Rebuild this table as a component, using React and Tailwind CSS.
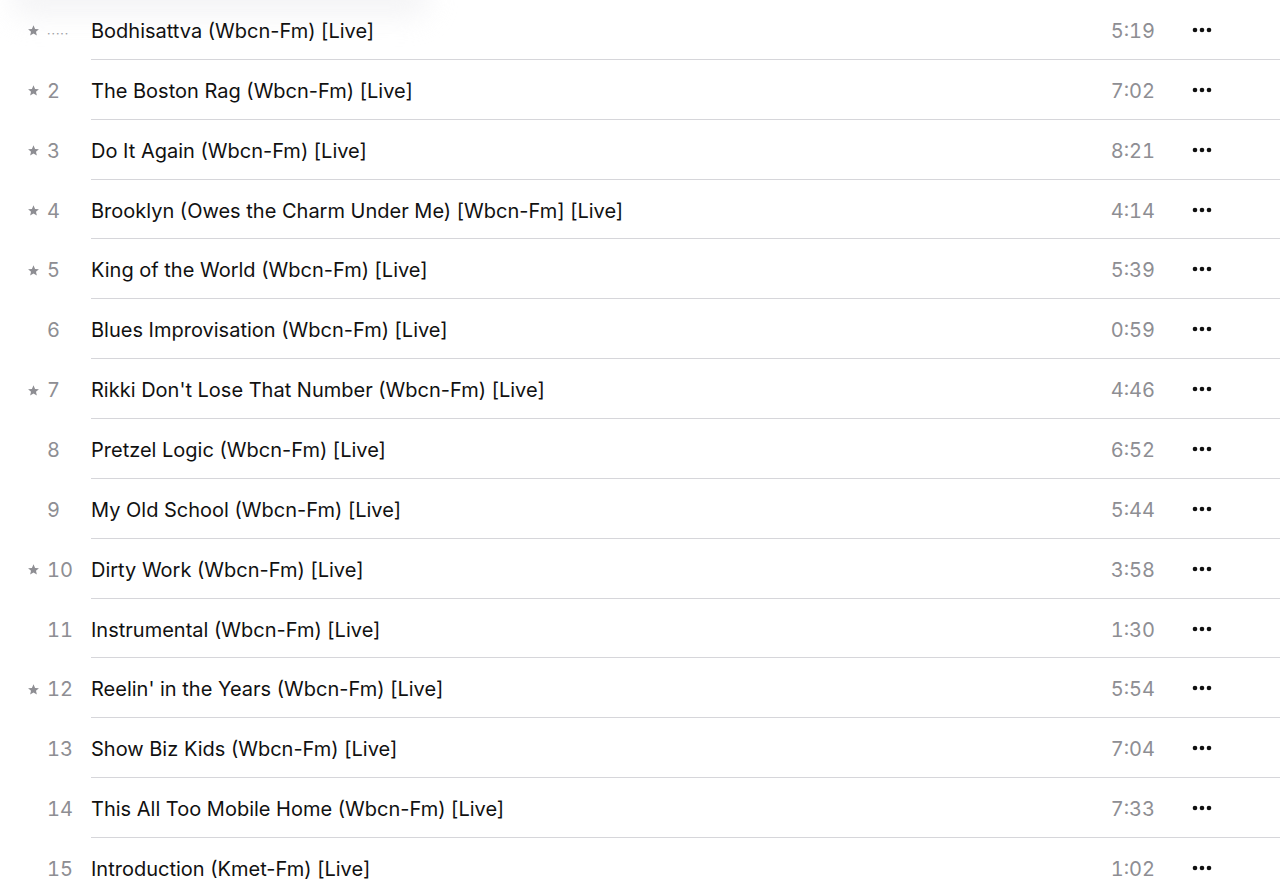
import React from "react";

const tracks = [
  { n: null, star: true, playing: true, title: "Bodhisattva (Wbcn-Fm) [Live]", d: "5:19" },
  { n: 2, star: true, title: "The Boston Rag (Wbcn-Fm) [Live]", d: "7:02" },
  { n: 3, star: true, title: "Do It Again (Wbcn-Fm) [Live]", d: "8:21" },
  { n: 4, star: true, title: "Brooklyn (Owes the Charm Under Me) [Wbcn-Fm] [Live]", d: "4:14" },
  { n: 5, star: true, title: "King of the World (Wbcn-Fm) [Live]", d: "5:39" },
  { n: 6, star: false, title: "Blues Improvisation (Wbcn-Fm) [Live]", d: "0:59" },
  { n: 7, star: true, title: "Rikki Don't Lose That Number (Wbcn-Fm) [Live]", d: "4:46" },
  { n: 8, star: false, title: "Pretzel Logic (Wbcn-Fm) [Live]", d: "6:52" },
  { n: 9, star: false, title: "My Old School (Wbcn-Fm) [Live]", d: "5:44" },
  { n: 10, star: true, title: "Dirty Work (Wbcn-Fm) [Live]", d: "3:58" },
  { n: 11, star: false, title: "Instrumental (Wbcn-Fm) [Live]", d: "1:30" },
  { n: 12, star: true, title: "Reelin' in the Years (Wbcn-Fm) [Live]", d: "5:54" },
  { n: 13, star: false, title: "Show Biz Kids (Wbcn-Fm) [Live]", d: "7:04" },
  { n: 14, star: false, title: "This All Too Mobile Home (Wbcn-Fm) [Live]", d: "7:33" },
  { n: 15, star: false, title: "Introduction (Kmet-Fm) [Live]", d: "1:02" },
];

function Star() {
  return (
    <svg width="13" height="13" viewBox="0 0 24 24" className="shrink-0">
      <path
        d="M12 2.5l2.9 6.6 7.1.6-5.4 4.7 1.6 7-6.2-3.7-6.2 3.7 1.6-7L2 9.7l7.1-.6z"
        fill="#8e8e93"
      />
    </svg>
  );
}

function Dots() {
  return (
    <svg width="20" height="6" viewBox="0 0 20 6">
      <circle cx="3" cy="3" r="2.3" fill="#111" />
      <circle cx="10" cy="3" r="2.3" fill="#111" />
      <circle cx="17" cy="3" r="2.3" fill="#111" />
    </svg>
  );
}

export default function App() {
  return (
    <div
      className="relative w-[1280px] h-[888px] overflow-hidden bg-white"
      style={{ fontFamily: "Inter, 'Noto Sans', sans-serif" }}
    >
      <div className="pointer-events-none absolute left-[10px] top-[-20px] h-[36px] w-[420px] rounded-full bg-[#ececef] blur-[14px] opacity-60" />
      {tracks.map((t, i) => (
        <div key={i} className="relative flex h-[59.86px] items-stretch">
          <div className="flex w-[91px] items-center pl-[27px] pt-[2px]">
            <div className="w-[14px]">{t.star && <Star />}</div>
            <div className="ml-[6px] text-[20px] tabular-nums text-[#8e8e93] leading-none">
              {t.playing ? (
                <span className="tracking-[1px] text-[12px] text-[#9a9aa0]">·····</span>
              ) : (
                t.n
              )}
            </div>
          </div>
          <div className="flex flex-1 items-center border-b border-[#d6d6da] pt-[3px]">
            <div className="flex-1 text-[20px] text-[#111111]">{t.title}</div>
            <div className="text-[20px] tabular-nums text-[#8e8e93] text-right">{t.d}</div>
            <div className="ml-[37px] mr-[68px] flex items-center pb-[2px]">
              <Dots />
            </div>
          </div>
        </div>
      ))}
    </div>
  );
}
